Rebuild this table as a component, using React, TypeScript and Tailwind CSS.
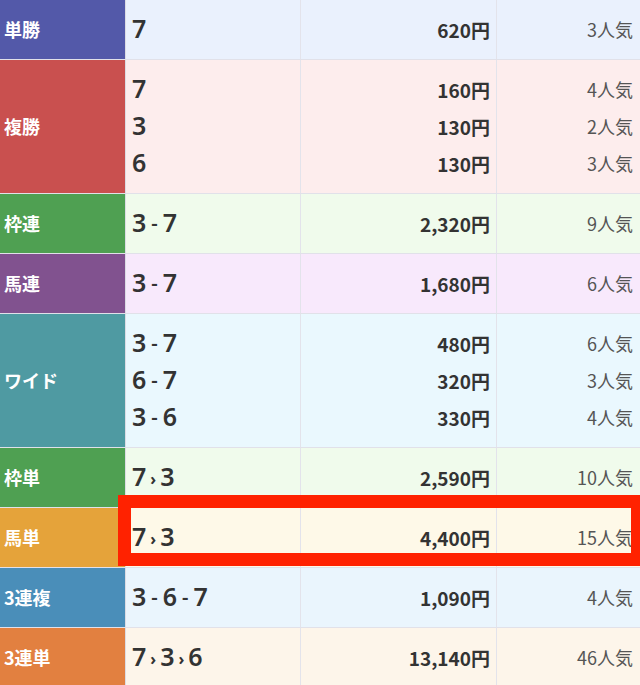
import { Fragment } from "react";

type Line = { combo: string; odds: string; pop: string };
type Row = { label: string; labelBg: string; rowBg: string; lines: Line[] };

const rows: Row[] = [
  { label: "単勝", labelBg: "bg-[#5359a9]", rowBg: "bg-[#eaf1fd]", lines: [{ combo: "7", odds: "620円", pop: "3人気" }] },
  {
    label: "複勝",
    labelBg: "bg-[#c9504f]",
    rowBg: "bg-[#fdeded]",
    lines: [
      { combo: "7", odds: "160円", pop: "4人気" },
      { combo: "3", odds: "130円", pop: "2人気" },
      { combo: "6", odds: "130円", pop: "3人気" },
    ],
  },
  { label: "枠連", labelBg: "bg-[#4fa052]", rowBg: "bg-[#f0fbec]", lines: [{ combo: "3-7", odds: "2,320円", pop: "9人気" }] },
  { label: "馬連", labelBg: "bg-[#81528f]", rowBg: "bg-[#f8e9fc]", lines: [{ combo: "3-7", odds: "1,680円", pop: "6人気" }] },
  {
    label: "ワイド",
    labelBg: "bg-[#4f9aa2]",
    rowBg: "bg-[#eaf8fe]",
    lines: [
      { combo: "3-7", odds: "480円", pop: "6人気" },
      { combo: "6-7", odds: "320円", pop: "3人気" },
      { combo: "3-6", odds: "330円", pop: "4人気" },
    ],
  },
  { label: "枠単", labelBg: "bg-[#4fa052]", rowBg: "bg-[#f0fbec]", lines: [{ combo: "7>3", odds: "2,590円", pop: "10人気" }] },
  { label: "馬単", labelBg: "bg-[#e5a33a]", rowBg: "bg-[#fef9e8]", lines: [{ combo: "7>3", odds: "4,400円", pop: "15人気" }] },
  { label: "3連複", labelBg: "bg-[#4a8eb9]", rowBg: "bg-[#eaf5fd]", lines: [{ combo: "3-6-7", odds: "1,090円", pop: "4人気" }] },
  { label: "3連単", labelBg: "bg-[#e28040]", rowBg: "bg-[#fdf5ea]", lines: [{ combo: "7>3>6", odds: "13,140円", pop: "46人気" }] },
];

// "-" = box/quinella style, ">" = ordered (exacta style)
function Combo({ value }: { value: string }) {
  const parts = value.split(/([->])/);
  return (
    <span className="flex items-center">
      {parts.map((p, i) =>
        p === "-" ? (
          <span key={i} className="mx-[5px] text-[20px]">-</span>
        ) : p === ">" ? (
          <span key={i} className="mx-[4px] mt-[6px] text-[16px] font-bold">›</span>
        ) : (
          <Fragment key={i}>{p}</Fragment>
        ),
      )}
    </span>
  );
}

export default function App() {
  return (
    <div className="relative w-[640px] h-[685px] overflow-hidden bg-white font-['Noto_Sans_CJK_JP','Noto_Sans',sans-serif]">
      {rows.map((row) => {
        const tall = row.lines.length > 1;
        return (
          <div
            key={row.label}
            className={`grid grid-cols-[126px_175px_196px_1fr] border-b border-[#e1e1e9] ${row.rowBg} ${tall ? "h-[134px]" : "h-[60px]"}`}
          >
            <div className={`flex items-center pl-[4px] text-[18px] font-bold text-white border-r border-[#dcdce4] ${row.labelBg}`}>
              {row.label}
            </div>
            <div className="flex flex-col justify-center pl-[6px] pb-[3px] font-['Noto_Sans','Noto_Sans_CJK_JP',sans-serif] text-[25px] font-semibold leading-[37px] text-[#333] border-r border-[#e3e3eb]">
              {row.lines.map((l, i) => (
                <Combo key={i} value={l.combo} />
              ))}
            </div>
            <div className="flex flex-col justify-center items-end pr-[6px] text-[19px] font-bold leading-[37px] text-[#333] border-r border-[#e3e3eb]">
              {row.lines.map((l, i) => (
                <span key={i}>{l.odds}</span>
              ))}
            </div>
            <div className="flex flex-col justify-center items-end pr-[7px] text-[18px] leading-[37px] text-[#555]">
              {row.lines.map((l, i) => (
                <span key={i}>{l.pop}</span>
              ))}
            </div>
          </div>
        );
      })}
      <div className="absolute left-[118px] top-[495px] w-[526px] h-[71px] border-[13px] border-[#ff2200]" />
    </div>
  );
}
